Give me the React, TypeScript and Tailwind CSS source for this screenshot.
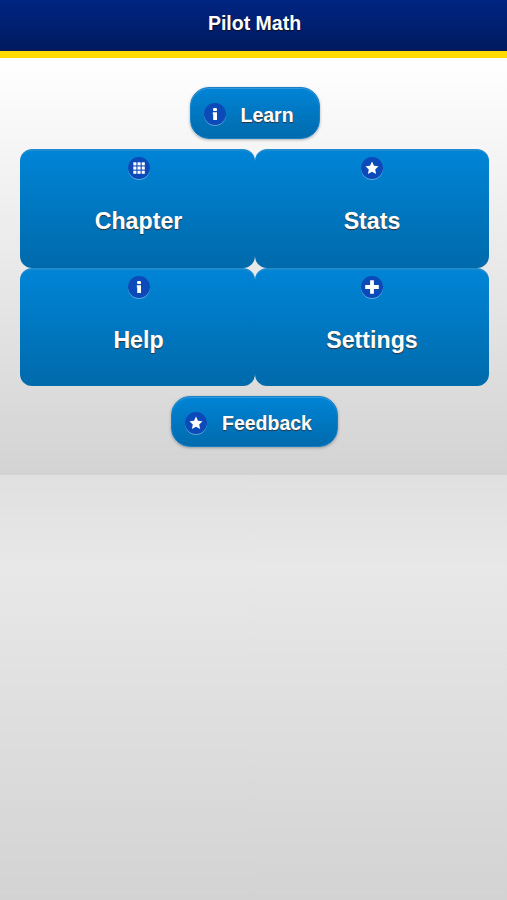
import React from "react";

type IconName = "info" | "grid" | "star" | "plus";

const Icon = ({ name }: { name: IconName }) => {
  return (
    <span className="flex size-[22px] shrink-0 items-center justify-center rounded-full bg-[#0b4ab8] shadow-[0_1px_0_rgba(255,255,255,0.35)]">
      <svg viewBox="0 0 22 22" className="size-[22px]" fill="#fff">
        {name === "info" && (
          <>
            <rect x="9.1" y="4.9" width="3.9" height="3.2" rx="1.2" />
            <path d="M8.8 9.2h4.2v7.8H9.2v-5.6h-.4z" />
          </>
        )}
        {name === "grid" &&
          [5.3, 9.5, 13.7].map((y) =>
            [5.3, 9.5, 13.7].map((x) => (
              <rect key={`${x}-${y}`} x={x} y={y} width="3.1" height="3.1" />
            ))
          )}
        {name === "star" && (
          <path d="M11 4.6l2 4.2 4.5.5-3.3 3.1.9 4.5-4.1-2.2-4.1 2.2.9-4.5-3.3-3.1 4.5-.5z" />
        )}
        {name === "plus" && (
          <path d="M9.1 4.2h3.8v4.9h4.9v3.8h-4.9v4.9H9.1v-4.9H4.2V9.1h4.9z" />
        )}
      </svg>
    </span>
  );
};

const PillButton = ({
  icon,
  label,
  className,
}: {
  icon: IconName;
  label: string;
  className: string;
}) => {
  return (
    <button
      className={`flex items-center rounded-[19px] border border-[#1680c8] bg-linear-to-b from-[#0084d6] to-[#006bad] pl-[13px] text-[19.5px] font-bold shadow-[0_1px_3px_rgba(0,0,0,0.3),inset_0_1px_0_rgba(255,255,255,0.18)] ${className}`}
    >
      <span className="pt-[2px]">
        <Icon name={icon} />
      </span>
      <span className="ml-[15px] pt-[3px] leading-6 [text-shadow:0_1px_1px_#333]">
        {label}
      </span>
    </button>
  );
};

const tiles: { icon: IconName; label: string }[] = [
  { icon: "grid", label: "Chapter" },
  { icon: "star", label: "Stats" },
  { icon: "info", label: "Help" },
  { icon: "plus", label: "Settings" },
];

export default function App() {
  return (
    <div className="flex h-[900px] w-[507px] flex-col overflow-hidden bg-[#ddd] font-['Liberation_Sans',Arial,sans-serif] text-white">
      <header className="flex h-[58px] shrink-0 items-center justify-center border-b-[7px] border-[#fddb00] bg-linear-to-b from-[#002482] to-[#001a5e] pb-[3px]">
        <h1 className="pl-[2px] text-[19.5px] font-bold [text-shadow:0_1px_1px_#111]">
          Pilot Math
        </h1>
      </header>

      <main className="flex h-[417px] shrink-0 flex-col items-center bg-linear-to-b from-white to-[#d3d3d3] pt-[29px] pl-[2px]">
        <PillButton icon="info" label="Learn" className="h-[52px] w-[130px]" />

        <div className="mt-[10px] grid w-[469px] grid-cols-[235px_234px] grid-rows-[118.5px_118.5px]">
          {tiles.map((tile) => (
            <button
              key={tile.label}
              className="flex flex-col items-center rounded-xl border-t-2 border-[#1f8bcf] bg-linear-to-b from-[#0084d6] to-[#006aab] pt-[6px] odd:pl-[2px]"
            >
              <Icon name={tile.icon} />
              <span className="mt-[26px] text-[23.2px] leading-8 font-bold [text-shadow:0_1px_1px_#333]">
                {tile.label}
              </span>
            </button>
          ))}
        </div>

        <PillButton
          icon="star"
          label="Feedback"
          className="mt-[10px] h-[51px] w-[167px]"
        />
      </main>

      <div className="flex-1 bg-linear-to-b from-[#e0e0e0] via-[#e8e8e8] via-22% to-[#d3d3d3]" />
    </div>
  );
}
